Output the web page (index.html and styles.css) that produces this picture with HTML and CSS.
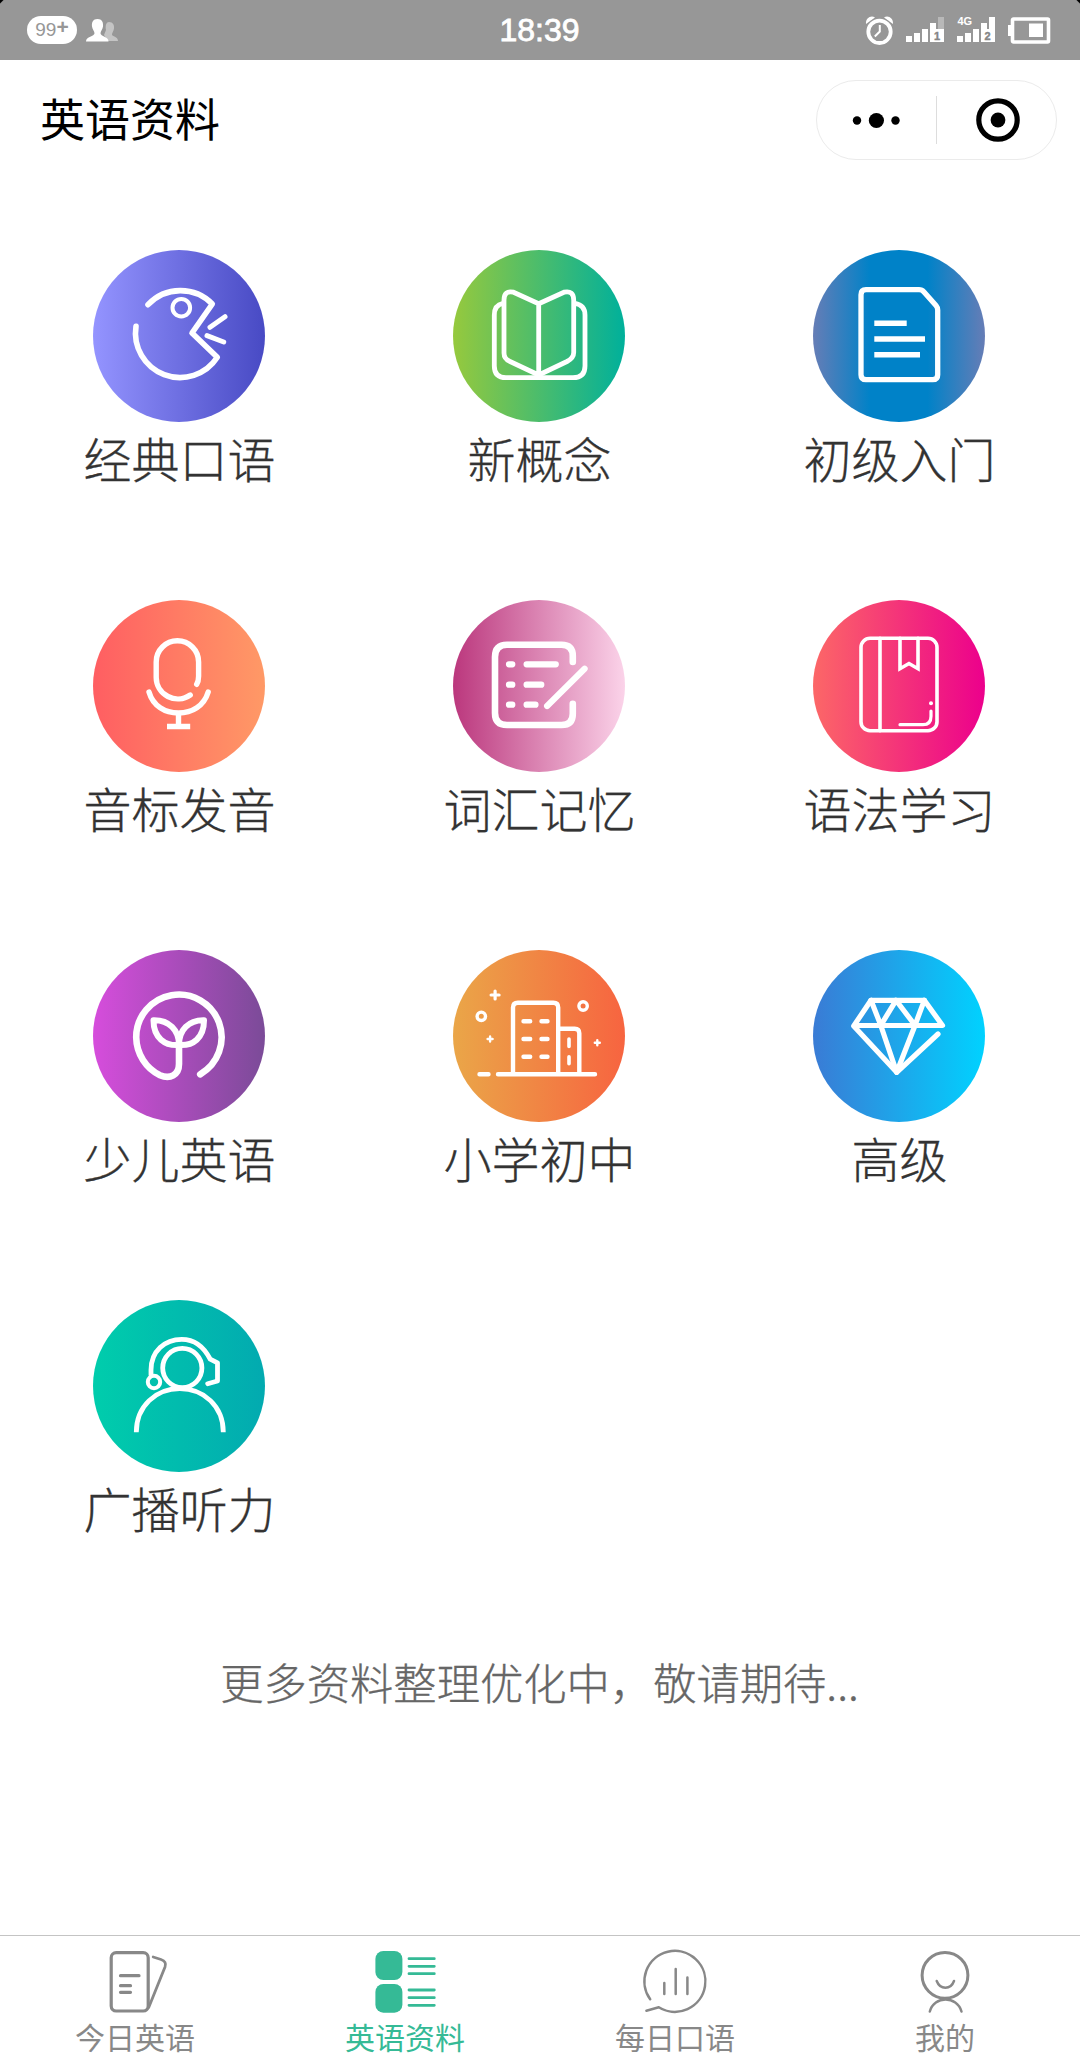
FILE: index.html
```html
<!DOCTYPE html>
<html lang="zh-CN">
<head>
    <meta charset="UTF-8">
    <meta name="viewport" content="width=device-width, initial-scale=1.0">
    <title>英语资料</title>
    <link rel="stylesheet" href="styles.css">
</head>
<body>
    <div class="status-bar">
        <div class="status-left">
            <span class="badge">99<b>+</b></span>
            <svg width="33" height="24" viewBox="0 0 33 24">
                <path fill="#c4c4c4" d="M23 4c4 0 5.500 3 5 6.500-.5 3-2 4.500-2 6 0 2 6 2 6 6.500H22l-4-6 2-5c-1-5 .5-8 3-8z"/>
                <path fill="#fff" d="M11.500 1c4.500 0 6 3.500 5.500 7.500-.4 3-2.500 5-2.500 6.700 0 3.300 8 3 8 8.300H0c0-5.300 8.500-5 8.500-8.300 0-1.700-2.100-3.700-2.500-6.700C5.500 4.500 7 1 11.500 1z"/>
            </svg>
        </div>
        <div class="time">18:39</div>
        <div class="status-right">
            <svg class="alarm" width="27" height="29" viewBox="0 0 27 29">
                <path fill="#fff" d="M0 8C-.5 2 5 -1 9 1.500zM27 8c.5-6-5-9-9-6.500z"/>
                <circle cx="13.500" cy="16" r="14" fill="#979797"/>
                <circle cx="13.500" cy="15.800" r="11.200" fill="none" stroke="#fff" stroke-width="3.800"/>
                <path d="M13.800 9v6.500l-5 5" fill="none" stroke="#fff" stroke-width="2"/>
            </svg>
            <svg class="signal" width="38" height="28" viewBox="0 0 38 28">
                <path fill="#b8b8b8" d="M32 1h6v12h-6z"/>
                <path fill="#fff" d="M0 20h6v6H0zM8 17h6v9H8zM16 13h6v13h-6zM24 7h6v6h8v13H24z"/>
                <text x="28" y="24" class="sim">1</text>
            </svg>
            <svg class="signal" width="38" height="28" viewBox="0 0 38 28">
                <text x="0.500" y="9" class="net">4G</text>
                <path fill="#fff" d="M0 20h6v6H0zM8 17h6v9H8zM16 13h6v13h-6zM24 7h6v6h2V1h6v25H24z"/>
                <text x="27.500" y="24" class="sim">2</text>
            </svg>
            <svg class="battery" width="42" height="27" viewBox="0 0 42 27">
                <rect x="4.500" y="2" width="36" height="23" rx="1" fill="none" stroke="#fff" stroke-width="3.600"/>
                <path fill="#fff" d="M0 8h4v11H0zM21 6.500h14v13.500H21z"/>
            </svg>
        </div>
    </div>

    <div class="header">
        <h1>英语资料</h1>
        <div class="capsule">
            <div class="capsule-item">
                <svg width="50" height="20" viewBox="0 0 50 20">
                    <circle cx="5" cy="10.500" r="4.200"/>
                    <circle cx="24.400" cy="10.500" r="7.600"/>
                    <circle cx="43.500" cy="10.500" r="4.200"/>
                </svg>
            </div>
            <div class="capsule-item">
                <svg width="46" height="46" viewBox="0 0 46 46">
                    <circle cx="24" cy="23" r="19.200" fill="none" stroke="#000" stroke-width="5.200"/>
                    <circle cx="24" cy="23" r="7.400"/>
                </svg>
            </div>
        </div>
    </div>

    <div class="grid">
        <div class="item">
            <div class="circle spoken">
                <svg viewBox="0 0 172 172" stroke-width="5.600">
                    <path d="M55 54.700A44.500 44.500 0 0 1 119.300 54L99 83l25.300 24.300A44.500 44.500 0 0 1 43 76.300"/>
                    <circle cx="88.300" cy="57.700" r="8.800" stroke-width="4"/>
                    <path d="M117 77.300l15-10.600M114 85.700l16.700 6.300" stroke-width="5"/>
                </svg>
            </div>
            <p>经典口语</p>
        </div>
        <div class="item">
            <div class="circle concept">
                <svg viewBox="0 0 172 172" stroke-width="4.800">
                    <path d="M50 53.300Q41.300 55 41.300 65v51Q41.300 127.700 53 127.700h67Q132 127.700 132 116V65Q132 55 122 53.300"/>
                    <path d="M85.700 53.700L60.500 42.200Q51 40 51 50v53Q51 109 57 111.500L85.700 125l28.300-13.500q6.700-3.500 6.700-9V50Q120.700 40 111 42.200zV125"/>
                </svg>
            </div>
            <p>新概念</p>
        </div>
        <div class="item">
            <div class="circle primary">
                <svg viewBox="0 0 172 172" stroke-width="5.300">
                    <path d="M53 39.700h53q3 0 5 2.300l12 13.500q1.700 2 1.700 4.500v64.700q0 5-5 5H53q-5 0-5-5v-80q0-5 5-5z"/>
                    <path class="flat" d="M61.300 73.300h32.400M61.300 89H112M61.300 104.700H107" stroke-width="5.500"/>
                </svg>
            </div>
            <p>初级入门</p>
        </div>
        <div class="item">
            <div class="circle phonetic">
                <svg viewBox="0 0 172 172" stroke-width="5.400">
                    <path d="M103.700 84.300q1.900-3 1.900-8V62a21.200 21.200 0 0 0-42.400 0v15.500A21.600 21.600 0 0 0 97.200 95"/>
                    <path d="M56 92C60 106 72 113 85.500 113S111 106 115.200 92"/>
                    <path class="flat" d="M85.500 113v13M74 126.500h23.200"/>
                </svg>
            </div>
            <p>音标发音</p>
        </div>
        <div class="item">
            <div class="circle vocab">
                <svg viewBox="0 0 172 172" stroke-width="6.600">
                    <path d="M119.800 62V56q0-11.300-11.300-11.300H54Q42 44.700 42 57v56q0 12 12 12h54.500q11.300 0 11.300-11.300v-10"/>
                    <path d="M56 64.300h3.300M56 84.700h3.300M56 104.700h3.300M73.600 64.300h29.200M73.600 84.700h14.700M73.600 104.700h8.900M131.600 68.700L94.100 106" stroke-width="6.200"/>
                </svg>
            </div>
            <p>词汇记忆</p>
        </div>
        <div class="item">
            <div class="circle grammar">
                <svg viewBox="0 0 172 172" stroke-width="3.600">
                    <rect x="48" y="38.300" width="76" height="92.400" rx="9"/>
                    <path d="M67 38.300v92.400M87 38.300v30.400l9-5.200 9 5.200V38.300" stroke-linejoin="miter"/>
                    <path d="M87 124.700h23q8 0 8-8.500V111" stroke-width="3.200"/>
                    <circle class="dot" cx="118" cy="103.300" r="2"/>
                </svg>
            </div>
            <p>语法学习</p>
        </div>
        <div class="item">
            <div class="circle kids">
                <svg viewBox="0 0 172 172" stroke-width="6.600">
                    <path d="M107.200 124.300A42.700 42.700 0 1 0 43.200 87.300C43.500 104 53 118.500 67 125.200 77 129.500 86 125 86 114V94"/>
                    <path d="M86 95C72 96 60.500 88 60.500 70.300 76 70 86 80 86 95zM86 95c14 1 25-7 25-24.700C95.500 70 86 80 86 95z" stroke-width="6"/>
                </svg>
            </div>
            <p>少儿英语</p>
        </div>
        <div class="item">
            <div class="circle school">
                <svg viewBox="0 0 172 172" stroke-width="4.400">
                    <path d="M60 124.300V57.500q0-4.800 4.800-4.800h35.600q4.800 0 4.800 4.800v66.800M105.200 78.700h16.500q4.600 0 4.600 4.600v41M45 124.300h97M26.500 124.300h9"/>
                    <path d="M70.500 71.300h6.700M88.500 71.300h6M70.500 89h6.700M88.500 89h6M70.500 106.700h6.700M88.500 106.700h6"/>
                    <path d="M116 89v7.500M116 106.700v7" stroke-width="3.600"/>
                    <circle cx="28.300" cy="66.300" r="4.200" stroke-width="3.400"/>
                    <circle cx="130.100" cy="56" r="4.200" stroke-width="3.400"/>
                    <path d="M42.100 41v8M38.100 45h8" stroke-width="3.200"/>
                    <path d="M37.100 86.500v5M34.600 89h5M144.300 90.200v5M141.800 92.700h5" stroke-width="2.400"/>
                </svg>
            </div>
            <p>小学初中</p>
        </div>
        <div class="item">
            <div class="circle advanced">
                <svg viewBox="0 0 172 172" stroke-width="5.200">
                    <path d="M125 84L83.700 122.300 40.700 76 58 50.300h53.300L129.500 75.500H41"/>
                    <path d="M58 50.300l9.800 25L83 50.300l19 25 9.300-25M67.800 75.500l15.900 46.800L102 75.500"/>
                </svg>
            </div>
            <p>高级</p>
        </div>
        <div class="item">
            <div class="circle radio">
                <svg viewBox="0 0 172 172" stroke-width="4.800">
                    <circle cx="89.300" cy="68" r="19.600"/>
                    <path d="M58 75v-5C58 51 72 39.300 88.700 39.300c12 0 22 7 28.500 19.900l7.300 3.600V81l-9.800 2.700"/>
                    <circle cx="61" cy="82" r="6.200" stroke-width="4"/>
                    <path class="flat" d="M43.300 132.300C43.300 106 63 88.700 86.800 88.700s43.500 17.300 43.500 43.600"/>
                </svg>
            </div>
            <p>广播听力</p>
        </div>
    </div>

    <p class="more">更多资料整理优化中，敬请期待...</p>

    <div class="tab-bar">
        <div class="tab">
            <svg viewBox="0 0 64 64" stroke-width="3.200">
                <rect x="8.200" y="2.700" width="37" height="58.300" rx="5"/>
                <path d="M17.500 25.700h18.500M17.500 35.700h10M17.500 42.300h10"/>
                <path d="M50.200 7l7.800 2.500q6 2 4 7.500L45.800 57.300" stroke-width="2.800"/>
            </svg>
            <span>今日英语</span>
        </div>
        <div class="tab active">
            <svg viewBox="0 0 64 64" stroke-width="2.800">
                <rect class="solid" x="2.400" y="1" width="27" height="29" rx="8"/>
                <rect class="solid" x="2.400" y="34" width="27" height="28.700" rx="8"/>
                <path d="M36 8.700h25.300M36 16.300h25.300M36 23.700h25.300M36 40h25.300M36 47.700h25.300M36 55.300h25.300"/>
            </svg>
            <span>英语资料</span>
        </div>
        <div class="tab">
            <svg viewBox="0 0 64 64" stroke-width="2.500">
                <path d="M7.200 49.300A30.500 30.500 0 1 1 15.800 57.300L3.400 60.700"/>
                <path d="M21.300 33v11M32.700 19v25M44.400 27.500V44"/>
            </svg>
            <span>每日口语</span>
        </div>
        <div class="tab">
            <svg viewBox="0 0 64 64" stroke-width="3">
                <circle cx="32" cy="25.300" r="22.900"/>
                <path d="M23.700 31c3.500 9 14 9 17.300 0M16.800 61.500C21 45.500 44 45.500 48.500 61.500" stroke-width="2.500"/>
            </svg>
            <span>我的</span>
        </div>
    </div>
</body>
</html>
```

FILE: styles.css
```css
* {
    box-sizing: border-box;
    margin: 0;
    padding: 0;
}
body {
    display: flex;
    flex-direction: column;
    width: 1080px;
    height: 2060px;
    background-color: #fff;
    font-family: "Noto Sans CJK SC", sans-serif;
    color: #333;
}
svg {
    display: block;
    overflow: visible;
}
.status-bar {
    display: grid;
    grid-template-columns: 1fr auto 1fr;
    align-items: center;
    height: 60px;
    padding: 0 30px 0 27px;
    background:
        linear-gradient(135deg, #000 2px, transparent 3px),
        linear-gradient(225deg, #000 2px, transparent 3px),
        #979797;
    font-family: "Liberation Sans", sans-serif;
}
.status-left,
.status-right {
    display: flex;
    align-items: center;
}
.status-left {
    gap: 9px;
}
.status-right {
    justify-content: flex-end;
}
.badge {
    display: flex;
    justify-content: center;
    width: 50px;
    height: 28px;
    border-radius: 14px;
    background: #fff;
    color: #979797;
    font-size: 19px;
    line-height: 28px;
}
.badge b {
    font-size: 21px;
    line-height: 21px;
}
.time {
    color: #fff;
    font-size: 32px;
    -webkit-text-stroke: 0.8px #fff;
    padding: 1px 0 0 2px;
}
.alarm {
    margin-right: 13px;
}
.signal {
    margin-right: 13px;
}
.sim {
    font-size: 11px;
    font-weight: bold;
    fill: #858585;
    stroke: #858585;
    stroke-width: 0.4px;
}
.net {
    font-size: 11px;
    font-weight: bold;
    fill: #fff;
}
.header {
    display: flex;
    justify-content: space-between;
    align-items: center;
    height: 120px;
    padding: 0 23px 0 40px;
}
.header h1 {
    color: #000;
    font-size: 45px;
    font-weight: 400;
    line-height: 60px;
    padding-bottom: 4px;
}
.capsule {
    display: flex;
    align-items: center;
    width: 241px;
    height: 80px;
    border: 1px solid #ebebeb;
    border-radius: 40px;
}
.capsule-item {
    display: flex;
    justify-content: center;
    align-items: center;
    flex: 1;
    height: 48px;
}
.capsule-item + .capsule-item {
    border-left: 1px solid #ddd;
}
.grid {
    display: grid;
    grid-template-columns: repeat(3, 360px);
    grid-auto-rows: 350px;
}
.item {
    display: flex;
    flex-direction: column;
    align-items: center;
    padding-top: 70px;
}
.item p {
    font-size: 48px;
    font-weight: 300;
    line-height: 70px;
    margin-right: 1px;
    -webkit-text-stroke: 0.3px #333;
}
.circle {
    width: 172px;
    height: 172px;
    margin-right: 2px;
    border-radius: 50%;
}
.circle svg {
    fill: none;
    stroke: #fff;
    stroke-linecap: round;
    stroke-linejoin: round;
}
.circle .flat {
    stroke-linecap: butt;
}
.circle .dot {
    fill: #fff;
    stroke: none;
}
.spoken {
    background: linear-gradient(to right, #9494ff, #484ac4);
}
.concept {
    background: linear-gradient(to right, #96c93d, #00b09b);
}
.primary {
    background: linear-gradient(to right, #667db6, #0082c8, #0082c8, #667db6);
}
.phonetic {
    background: linear-gradient(to right, #ff5e62, #ff9966);
}
.vocab {
    background: linear-gradient(to right, #bb377d, #fbd3e9);
}
.grammar {
    background: linear-gradient(to right, #fc6767, #ec008c);
}
.kids {
    background: linear-gradient(to right, #d64ddc, #7b4b98);
}
.school {
    background: linear-gradient(to right, #eaa648, #f76440);
}
.advanced {
    background: linear-gradient(to right, #3a7bd5, #00d2ff);
}
.radio {
    background: linear-gradient(to right, #00cdac, #02aab0);
}
.more {
    margin-top: 69px;
    padding-right: 1px;
    text-align: center;
    color: #666;
    font-size: 43.3px;
    font-weight: 300;
    line-height: 64px;
    -webkit-text-stroke: 0.3px #666;
}
.tab-bar {
    display: flex;
    height: 125px;
    margin-top: auto;
    border-top: 1px solid #c4c4c4;
}
.tab {
    display: flex;
    flex-direction: column;
    align-items: center;
    flex: 1;
    padding-top: 14px;
    color: #888;
    font-size: 30px;
    line-height: 40px;
}
.tab svg {
    width: 64px;
    height: 64px;
    margin-bottom: 2px;
    fill: none;
    stroke: currentColor;
    stroke-linecap: round;
    stroke-linejoin: round;
}
.tab .solid {
    fill: currentColor;
    stroke: none;
}
.tab.active {
    color: #35ba96;
}
```
